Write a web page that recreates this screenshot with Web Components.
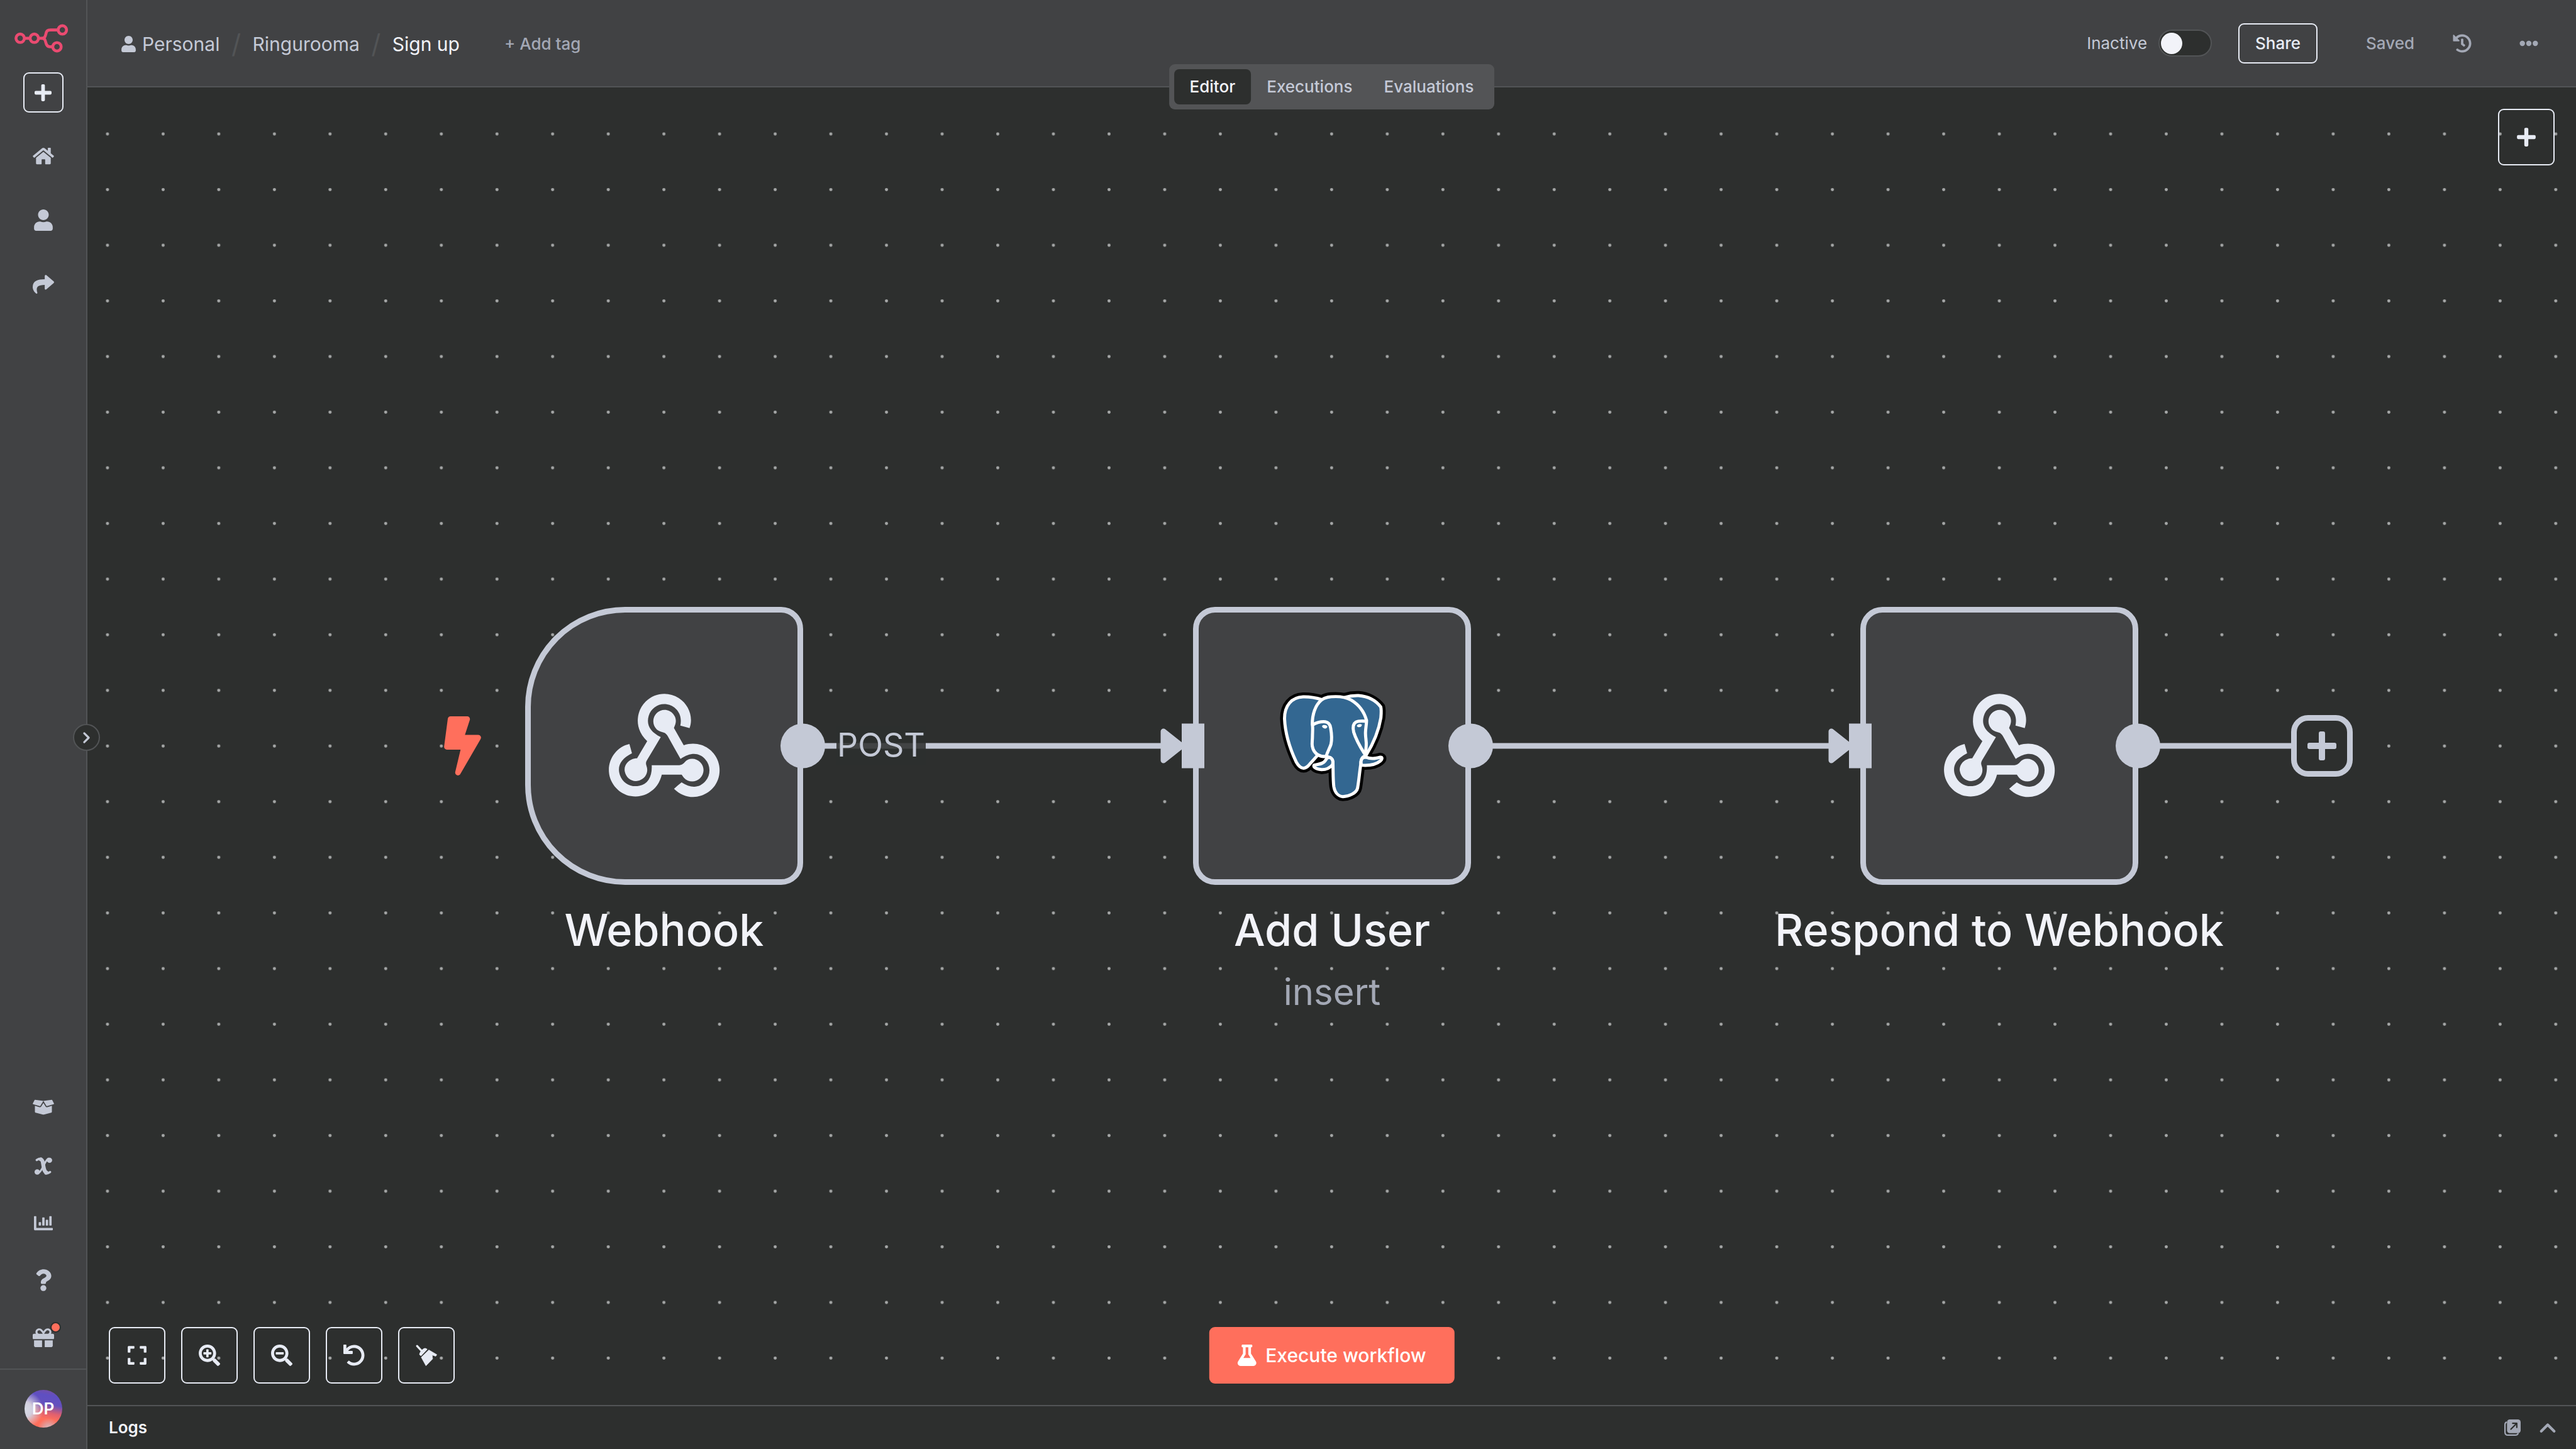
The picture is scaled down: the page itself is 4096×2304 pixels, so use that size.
<!DOCTYPE html>
<html lang="en">
<head>
<meta charset="utf-8">
<title>Sign up - workflow editor</title>
<style>
  html, body { margin: 0; height: 100%; }
  body {
    --panel: #414244;
    --canvas: #2d2f2e;
    --line: #525456;
    --text: #c4c9d6;
    --text-strong: #f2f3f9;
    --text-muted: #a3a8b5;
    --outline: #e7ebf4;
    --primary: #ff6f5c;
    background: var(--canvas);
    color: var(--text);
    font: 400 26px/34px Inter, "Liberation Sans", sans-serif;
    overflow: hidden;
  }
</style>
</head>
<body>
<app-shell></app-shell>

<script>
const ICONS = {
  plus: ['0 0 448 512', '<path d="M416 208H272V64c0-17.67-14.33-32-32-32h-32c-17.67 0-32 14.33-32 32v144H32c-17.67 0-32 14.33-32 32v32c0 17.67 14.33 32 32 32h144v144c0 17.67 14.33 32 32 32h32c17.67 0 32-14.33 32-32V304h144c17.67 0 32-14.33 32-32v-32c0-17.67-14.33-32-32-32z"/>'],
  home: ['0 0 576 512', '<path d="M488 312.7V456c0 13.3-10.7 24-24 24H348c-6.6 0-12-5.4-12-12V356c0-6.6-5.4-12-12-12h-72c-6.6 0-12 5.4-12 12v112c0 6.6-5.4 12-12 12H112c-13.3 0-24-10.7-24-24V312.7c0-3.6 1.6-7 4.4-9.3l188-154.8c4.4-3.6 10.8-3.6 15.3 0l188 154.8c2.7 2.3 4.3 5.7 4.3 9.3zm83.6-60.9L488 182.9V44.4c0-6.6-5.4-12-12-12h-56c-6.6 0-12 5.4-12 12V117l-89.5-73.7c-17.7-14.6-43.3-14.6-61 0L4.4 251.8c-5.1 4.2-5.8 11.8-1.6 16.9l25.5 31c4.2 5.1 11.8 5.8 16.9 1.6l235.2-193.7c4.4-3.6 10.8-3.6 15.3 0l235.2 193.7c5.1 4.2 12.7 3.5 16.9-1.6l25.5-31c4.2-5.2 3.4-12.7-1.7-16.9z"/>'],
  user: ['0 0 448 512', '<path d="M224 256c70.7 0 128-57.3 128-128S294.7 0 224 0 96 57.3 96 128s57.3 128 128 128zm89.6 32h-16.7c-22.2 10.2-46.9 16-72.9 16s-50.6-5.8-72.9-16h-16.7C60.2 288 0 348.2 0 422.4V464c0 26.5 21.5 48 48 48h352c26.5 0 48-21.5 48-48v-41.6c0-74.2-60.2-134.4-134.4-134.4z"/>'],
  share: ['0 0 512 512', '<path d="M503.691 189.836L327.687 37.851C312.281 24.546 288 35.347 288 56.015v80.053C127.371 137.907 0 170.1 0 322.326c0 61.441 39.581 122.309 83.333 154.132 13.653 9.931 33.111-2.533 28.077-18.631C66.066 312.814 132.917 274.316 288 272.085V360c0 20.7 24.3 31.453 39.687 18.164l176.004-152c11.071-9.562 11.086-26.753 0-36.328z"/>'],
  box: ['0 0 640 512', '<path d="M425.7 256c-16.9 0-32.8-9-41.4-23.4L320 126l-64.2 106.6c-8.7 14.5-24.6 23.5-41.5 23.5-4.5 0-9-.6-13.3-1.9L64 215v178c0 14.7 10 27.5 24.2 31l216.2 54.1c10.2 2.5 20.9 2.5 31 0L551.8 424c14.2-3.6 24.2-16.4 24.2-31V215l-137 39.1c-4.3 1.3-8.8 1.9-13.3 1.9zm212.6-112.2L586.8 41c-3.1-6.2-9.8-9.8-16.7-8.9L320 64l91.7 152.1c3.8 6.3 11.4 9.3 18.5 7.3l197.9-56.5c9.9-2.9 14.7-13.9 10.2-23.1zM53.2 41L1.7 143.8c-4.6 9.2.3 20.2 10.1 23l197.9 56.5c7.1 2 14.7-1 18.5-7.3L320 64 69.8 32.1c-6.9-.8-13.6 2.8-16.6 8.9z"/>'],
  variable: ['0 0 39 39', '<g fill="none" stroke="currentColor" stroke-linecap="round"><path stroke-width="8.500" d="M14 5C18 6 18 11 19.500 19C21 27 21.500 32 26 34"/><path stroke-width="5" d="M4.700 6.200C8 4 11 3 15 3.200M24 36C28 36.200 31 35.500 34.300 33"/><path stroke-width="4" d="M31 3C26 5 24 11 20 19C16 27 13 33 8 36"/></g><ellipse cx="33" cy="6.800" rx="5.900" ry="5.700"/><ellipse cx="5.800" cy="32.600" rx="5.900" ry="5.900"/>'],
  chart: ['0 0 512 512', '<path d="M332.8 320h38.4c6.4 0 12.8-6.4 12.8-12.8V172.8c0-6.4-6.4-12.8-12.8-12.8h-38.4c-6.400 0-12.8 6.4-12.8 12.8v134.4c0 6.4 6.4 12.8 12.8 12.8zm96 0h38.4c6.4 0 12.8-6.4 12.8-12.8V76.8c0-6.4-6.4-12.8-12.8-12.8h-38.4c-6.4 0-12.8 6.4-12.8 12.8v230.4c0 6.4 6.4 12.8 12.8 12.8zm-288 0h38.4c6.4 0 12.8-6.4 12.8-12.8v-70.4c0-6.4-6.4-12.8-12.8-12.8h-38.4c-6.4 0-12.8 6.4-12.8 12.8v70.4c0 6.4 6.4 12.8 12.8 12.8zm96 0h38.4c6.4 0 12.8-6.4 12.8-12.8V108.8c0-6.4-6.4-12.8-12.8-12.8h-38.4c-6.4 0-12.8 6.4-12.8 12.8v198.4c0 6.4 6.4 12.8 12.8 12.8zM496 384H64V80c0-8.84-7.16-16-16-16H16C7.16 64 0 71.16 0 80v336c0 17.67 14.33 32 32 32h464c8.84 0 16-7.16 16-16v-32c0-8.84-7.16-16-16-16z"/>'],
  question: ['0 0 384 512', '<path d="M202.021 0C122.202 0 70.503 32.703 29.914 91.026c-7.363 10.58-5.093 25.086 5.178 32.874l43.138 32.709c10.373 7.865 25.132 6.026 33.253-4.148 25.049-31.381 43.63-49.449 82.757-49.449 30.764 0 68.816 19.799 68.816 49.631 0 22.552-18.617 34.134-48.993 51.164-35.423 19.86-82.299 44.576-82.299 106.405V320c0 13.255 10.745 24 24 24h72.471c13.255 0 24-10.745 24-24v-5.773c0-42.86 125.268-44.645 125.268-160.627C377.504 66.256 286.902 0 202.021 0zM192 373.459c-38.196 0-69.271 31.075-69.271 69.271 0 38.195 31.075 69.27 69.271 69.27s69.271-31.075 69.271-69.271-31.075-69.27-69.271-69.27z"/>'],
  gift: ['0 0 512 512', '<path d="M32 448c0 17.7 14.3 32 32 32h160V320H32v128zm256 32h160c17.7 0 32-14.3 32-32V320H288v160zm192-320h-42.1c6.2-12.1 10.1-25.5 10.1-40 0-48.5-39.5-88-88-88-41.6 0-68.5 21.3-103 68.3-34.5-47-61.4-68.3-103-68.3-48.5 0-88 39.5-88 88 0 14.5 3.8 27.9 10.1 40H32c-17.7 0-32 14.3-32 32v80c0 8.8 7.2 16 16 16h480c8.8 0 16-7.2 16-16v-80c0-17.7-14.3-32-32-32zm-326.1 0c-22.1 0-40-17.9-40-40s17.9-40 40-40c19.9 0 34.6 3.3 86.1 80h-86.1zm206.1 0h-86.1c51.4-76.5 65.7-80 86.1-80 22.1 0 40 17.9 40 40s-17.9 40-40 40z"/>'],
  flask: ['0 0 448 512', '<path d="M437.2 403.5L320 215V64h8c13.3 0 24-10.7 24-24V24c0-13.3-10.7-24-24-24H120c-13.3 0-24 10.7-24 24v16c0 13.3 10.7 24 24 24h8v151L10.8 403.5C-18.5 450.6 15.3 512 70.9 512h306.2c55.7 0 89.4-61.5 60.1-108.5zM137.900 320l48.2-77.6c3.7-5.2 5.8-11.6 5.8-18.4V64h64v160c0 6.9 2.2 13.2 5.8 18.4l48.2 77.6h-172z"/>'],
  zoomIn: ['0 0 512 512', '<path d="M304 192v32c0 6.6-5.4 12-12 12h-56v56c0 6.600-5.4 12-12 12h-32c-6.6 0-12-5.4-12-12v-56h-56c-6.6 0-12-5.4-12-12v-32c0-6.6 5.4-12 12-12h56v-56c0-6.6 5.4-12 12-12h32c6.6 0 12 5.4 12 12v56h56c6.6 0 12 5.4 12 12zm201 284.7L476.7 505c-9.4 9.4-24.6 9.4-33.9 0L343 405.3c-4.5-4.5-7-10.6-7-17V372c-35.3 27.6-79.7 44-128 44C93.1 416 0 322.9 0 208S93.1 0 208 0s208 93.1 208 208c0 48.3-16.4 92.7-44 128h16.3c6.4 0 12.5 2.5 17 7l99.7 99.7c9.3 9.4 9.3 24.6 0 34zM344 208c0-75.2-60.8-136-136-136S72 132.8 72 208s60.8 136 136 136 136-60.8 136-136z"/>'],
  zoomOut: ['0 0 512 512', '<path d="M304 192v32c0 6.6-5.4 12-12 12H124c-6.6 0-12-5.4-12-12v-32c0-6.6 5.4-12 12-12h168c6.6 0 12 5.4 12 12zm201 284.7L476.7 505c-9.4 9.4-24.6 9.4-33.9 0L343 405.3c-4.5-4.5-7-10.6-7-17V372c-35.3 27.6-79.7 44-128 44C93.1 416 0 322.9 0 208S93.1 0 208 0s208 93.1 208 208c0 48.3-16.4 92.7-44 128h16.3c6.4 0 12.5 2.5 17 7l99.7 99.7c9.3 9.4 9.3 24.6 0 34zM344 208c0-75.2-60.8-136-136-136S72 132.8 72 208s60.8 136 136 136 136-60.8 136-136z"/>'],
  undo: ['0 0 512 512', '<path d="M212.333 224.333H12c-6.627 0-12-5.373-12-12V12C0 5.373 5.373 0 12 0h48c6.627 0 12 5.373 12 12v78.112C117.773 39.279 184.26 7.47 258.175 8.007c136.906.994 246.448 111.623 246.157 248.532C504.041 393.258 393.12 504 256.333 504c-64.089 0-122.496-24.313-166.51-64.215-5.099-4.622-5.334-12.554-.467-17.42l33.967-33.967c4.474-4.474 11.662-4.717 16.401-.525C170.76 415.336 211.58 432 256.333 432c97.268 0 176-78.716 176-176 0-97.267-78.716-176-176-176-58.496 0-110.28 28.476-142.274 72.333h98.274c6.627 0 12 5.373 12 12v48c0 6.627-5.373 12-12 12z"/>'],
  expand: ['0 0 448 512', '<path d="M0 180V56c0-13.3 10.7-24 24-24h124c6.6 0 12 5.4 12 12v40c0 6.6-5.4 12-12 12H64v84c0 6.6-5.4 12-12 12H12c-6.6 0-12-5.4-12-12zM288 44v40c0 6.6 5.4 12 12 12h84v84c0 6.6 5.4 12 12 12h40c6.6 0 12-5.4 12-12V56c0-13.3-10.7-24-24-24H300c-6.6 0-12 5.4-12 12zm148 276h-40c-6.6 0-12 5.4-12 12v84h-84c-6.6 0-12 5.4-12 12v40c0 6.6 5.4 12 12 12h124c13.3 0 24-10.7 24-24V332c0-6.600-5.4-12-12-12zM160 468v-40c0-6.6-5.4-12-12-12H64v-84c0-6.6-5.4-12-12-12H12c-6.6 0-12 5.4-12 12v124c0 13.3 10.7 24 24 24h124c6.6 0 12-5.4 12-12z"/>'],
  broom: ['0 0 48 48', '<path stroke="currentColor" stroke-width="4.500" stroke-linecap="round" d="M3 3L14 15"/><path stroke="currentColor" stroke-width="2" stroke-linejoin="round" d="M22 9L25 10.500L12 24.500L9 22C9.300 19 12 15 15 12C17.500 10 20 8.500 22 9z"/><path stroke="currentColor" stroke-width="1" stroke-linejoin="round" d="M29.500 12L47.500 22.500L45 26.200L37 23.500L38 32L23 47.500L12.500 28.500z"/>'],
  history: ['0 0 512 512', '<path d="M504 255.531c.253 136.64-111.18 248.372-247.82 248.468-59.015.042-113.223-20.53-155.822-54.911-11.077-8.94-11.905-25.541-1.839-35.607l11.267-11.267c8.609-8.609 22.353-9.551 31.891-1.984C173.062 425.135 212.781 440 256 440c101.705 0 184-82.311 184-184 0-101.705-82.311-184-184-184-48.814 0-93.149 18.969-126.068 49.932l50.754 50.754c10.08 10.08 2.941 27.314-11.313 27.314H24c-8.837 0-16-7.163-16-16V38.627c0-14.254 17.234-21.393 27.314-11.314l49.372 49.372C129.209 34.136 189.552 8 256 8c136.81 0 247.747 110.78 248 247.531zm-180.912 78.784l9.823-12.63c8.138-10.463 6.253-25.542-4.21-33.679L288 256.349V152c0-13.255-10.745-24-24-24h-16c-13.255 0-24 10.745-24 24v135.651l65.409 50.874c10.463 8.137 25.541 6.253 33.679-4.21z"/>'],
  dots: ['0 0 512 512', '<circle cx="80" cy="256" r="72"/><circle cx="256" cy="256" r="72"/><circle cx="432" cy="256" r="72"/>'],
  bolt: ['0 0 320 512', '<path d="M296 160H180.6l42.6-129.8C227.2 15 215.7 0 200 0H56C44 0 33.8 8.9 32.2 20.8l-32 240C-1.7 275.2 9.5 288 24 288h118.7L96.6 482.5c-3.6 15.2 8 29.5 23.3 29.5 8.4 0 16.4-4.4 20.8-12l176-304c9.3-15.9-2.2-36-20.7-36z"/>'],
  chevronRight: ['0 0 18 28', '<path d="M4 4L14 14L4 24" fill="none" stroke="currentColor" stroke-width="4.500" stroke-linecap="round" stroke-linejoin="round"/>'],
  chevronUp: ['0 0 36 24', '<path d="M3.500 19.500L18 5L32.500 19.500" fill="none" stroke="currentColor" stroke-width="6" stroke-linecap="round" stroke-linejoin="round"/>'],
  popOut: ['0 0 36 36', '<path d="M5.500 5.500C3 6.500 1.500 8 1.500 11V28C1.500 32 4 34.500 8 34.500H24C27.500 34.500 30 32.500 30.500 30" fill="none" stroke="currentColor" stroke-width="3"/><rect x="6" width="30" height="30" rx="6"/><path d="M14.500 21.500L27 9M18.500 8.500H27.500V17.500" fill="none" stroke="#2d2f2e" stroke-width="3" stroke-linecap="round" stroke-linejoin="round"/>'],
  brand: ['33 53 120 64', '<g fill="none" stroke="#ea4b71" stroke-width="6.500"><circle cx="45.700" cy="84.800" r="9.300"/><circle cx="77" cy="84.800" r="9.300"/><circle cx="139.300" cy="66.300" r="9.300"/><circle cx="127.300" cy="103.700" r="9.300"/><path d="M55 84.800H68M86 84.800H93C100 84.800 101 82 102.500 76C104 68.500 106 66.300 113 66.300H130M93 84.800C100 84.800 101 88 102.500 94C104 101 107 103.700 112 103.700H118"/></g>'],
  webhook: ['0 2 256 239', '<path d="M119.54 100.503c-10.61 17.836-20.775 35.108-31.152 52.25-2.665 4.401-3.984 7.986-1.855 13.58 5.878 15.454-2.414 30.493-17.998 34.575-14.697 3.851-29.016-5.808-31.932-21.543-2.584-13.927 8.224-27.58 23.58-29.757 1.286-.184 2.6-.205 4.762-.367l23.358-39.168C73.612 95.465 64.868 78.39 66.803 57.23c1.368-14.957 7.25-27.883 18-38.477 20.59-20.288 52.002-23.573 76.246-8.001 23.284 14.958 33.948 44.094 24.858 69.031-6.854-1.858-13.756-3.732-21.343-5.79 2.854-13.865.743-26.315-8.608-36.981-6.178-7.042-14.106-10.733-23.12-12.093-18.072-2.73-35.815 8.88-41.08 26.618-5.976 20.13 3.069 36.575 27.784 48.967z"/><path d="M149.841 79.41c7.475 13.187 15.065 26.573 22.587 39.836 38.02-11.763 66.686 9.284 76.97 31.817 12.422 27.219 3.93 59.457-20.465 76.25-25.04 17.238-56.707 14.293-78.892-7.851 5.654-4.733 11.336-9.487 17.407-14.566 21.912 14.192 41.077 13.524 55.305-3.282 12.133-14.337 11.87-35.714-.615-49.75-14.408-16.197-33.707-16.691-57.035-1.143-9.677-17.168-19.522-34.199-28.893-51.491-3.16-5.828-6.648-9.21-13.77-10.443-11.893-2.062-19.571-12.275-20.032-23.717-.453-11.316 6.214-21.545 16.634-25.53 10.322-3.949 22.435-.762 29.378 8.014 5.674 7.17 7.477 15.24 4.491 24.083-.83 2.466-1.905 4.852-3.07 7.774z"/><path d="M167.707 187.21h-45.77c-4.387 18.044-13.863 32.612-30.19 41.876-12.693 7.2-26.373 9.641-40.933 7.29-26.808-4.323-48.728-28.456-50.658-55.63-2.184-30.784 18.975-58.147 47.178-64.293 1.947 7.071 3.915 14.21 5.862 21.264-25.876 13.202-34.832 29.836-27.59 50.636 6.375 18.304 24.484 28.337 44.147 24.457 20.08-3.962 30.204-20.65 28.968-47.432 19.036 0 38.088-.197 57.126.097 7.434.117 13.173-.654 18.773-7.208 9.22-10.784 26.191-9.811 36.121.374 10.148 10.409 9.662 27.157-1.077 37.127-10.361 9.62-26.73 9.106-36.424-1.26-1.992-2.136-3.562-4.673-5.533-7.298z"/>'],
  postgres: ['12 73 800 800', `
    <defs>
      <path id="ear-r" d="M494 149C530 138 560 135 590 136C650 141 705 168 738 212C744 232 741 262 739 285C725 370 690 455 640 536L520 300z"/>
      <path id="ear-l" d="M346 164C300 150 250 144 218 145C140 148 94 205 94 290C98 385 132 495 172 580C190 612 205 622 222 622C240 622 250 610 262 596L312 540L330 300z"/>
      <path id="head" d="M280 330C279 262 300 200 341 166C368 145 400 143 437 143C480 143 512 151 540 166C590 196 626 240 643 302C643 330 636 360 636 388C636 420 643 440 641 470C640 500 634 515 636 538C612 548 604 562 604 600C596 650 592 705 583 755C576 790 522 812 485 813C450 810 430 780 424 745C418 700 420 640 418 580C414 550 392 546 372 545C350 545 335 543 318 533C300 522 285 505 280 475C276 455 281 440 281 410C281 380 285 352 280 330z"/>
      <path id="tusk-l" d="M418 580C414 556 400 550 389 550C376 552 372 566 365 574C350 596 322 594 292 602C284 612 300 626 342 632C378 632 402 616 416 598z"/>
      <path id="tusk-r" d="M606 580C608 556 620 549 640 549C675 564 705 556 735 549C750 549 750 562 735 574C704 600 660 606 608 602z"/>
    </defs>
    <g fill="#000" stroke="#000" stroke-width="60" stroke-linejoin="round"><use href="#ear-r"/><use href="#ear-l"/><use href="#head"/><use href="#tusk-l"/><use href="#tusk-r"/></g>
    <g fill="#336791" stroke="#fff" stroke-width="21" stroke-linejoin="round" stroke-linecap="round">
      <use href="#ear-r"/><use href="#ear-l"/><use href="#head"/><use href="#tusk-l"/><use href="#tusk-r"/>
      <path fill="none" d="M284 331C310 317 340 309 368 312C390 316 400 330 403 355C411 400 412 430 405 462C396 490 384 508 374 538M641 308C618 306 590 303 572 314C552 326 550 350 557 380C572 430 602 482 632 530"/>
    </g>
    <g fill="#fff"><path d="M345 341C350 330 372 331 381 342C382 350 372 357 364 357C356 356 346 349 345 341z"/><path d="M578 338C584 326 602 324 612 331C612 341 603 348 594 348C586 348 579 344 578 338z"/></g>`]
};

function define(name, css, html) {
  const template = document.createElement('template');
  const build = host => {
    template.innerHTML = `<style>*,*::before{box-sizing:border-box}${css}</style>${typeof html === 'function' ? html(host) : html}`;
    return template.content.cloneNode(true);
  };
  customElements.define(name, class extends HTMLElement {
    connectedCallback() {
      if (this.shadowRoot) return;
      this.attachShadow({ mode: 'open' }).append(build(this));
    }
  });
}

/* Icon: name picks the drawing, width is in pixels, height follows the view box. */
define('ui-icon', `
  :host { display: inline-flex; flex: none; }
  svg { display: block; fill: currentColor; overflow: visible; }
`, host => {
  const [box, body] = ICONS[host.getAttribute('name')];
  const [, , w, h] = box.split(' ').map(Number);
  const width = Number(host.getAttribute('width'));
  return `<svg viewBox="${box}" width="${width}" height="${Math.round(width * h / w)}" aria-hidden="true">${body}</svg>`;
});

/* Button with an outline, holding an icon or a short text. */
define('outline-button', `
  :host { display: block; flex: none; }
  button {
    display: flex; align-items: center; justify-content: center;
    width: var(--button-width, 90px); height: var(--button-height, 90px);
    margin: 0; padding: 0; border: 2px solid var(--outline); border-radius: 9px;
    background: none; color: var(--outline); font: inherit; font-weight: 500;
  }
`, host => `<button type="button" ${host.title ? `aria-label="${host.title}"` : ''}><slot></slot></button>`);

define('side-bar', `
  :host {
    position: relative; z-index: 2; display: flex; flex-direction: column; align-items: center; flex: none;
    width: 139px; background: var(--panel); border-right: 2px solid var(--line);
  }
  .brand { display: flex; padding: 38px 5px 31px 0; }
  outline-button { --button-width: 64px; --button-height: 64px; }
  nav { display: flex; flex-direction: column; width: 100%; }
  nav.top { padding-top: 18px; }
  nav.bottom { margin-top: auto; }
  a { display: flex; align-items: center; justify-content: center; color: var(--text); text-decoration: none; }
  .top a { height: 102px; }
  .bottom a { height: 91px; }
  .bottom a:first-child { margin-bottom: 2px; }
  .gift { position: relative; display: flex; }
  .gift::after {
    content: ""; position: absolute; right: -11px; top: -8px; width: 17px; height: 17px;
    box-sizing: border-box; border: 2px solid var(--canvas); border-radius: 50%; background: var(--primary);
  }
  .account { display: flex; justify-content: center; width: 100%; margin-top: 4px; padding: 32px 0 34px; border-top: 2px solid var(--line); }
  .avatar {
    display: flex; align-items: center; justify-content: center; width: 60px; height: 60px; border-radius: 50%;
    color: #fff; font-weight: 600;
    background:
      radial-gradient(circle at 64% 104%, #e0c4c8 0, #e0a0a0 10%, transparent 24%),
      radial-gradient(circle at 0 52%, #d8dbe6 0, #d2cfde 18%, transparent 44%),
      linear-gradient(190deg, #7c4f9e 0, #5f4fc2 18%, #6450bd 38%, #e0606f 58%, #ff6f5c 72%);
  }
  .collapse {
    position: absolute; top: 1151px; right: -22px; display: flex; align-items: center; justify-content: center;
    width: 43px; height: 43px; padding: 0; border: 2px solid var(--line); border-radius: 50%;
    background: var(--canvas); color: var(--text);
  }
`, `
  <div class="brand"><ui-icon name="brand" width="86"></ui-icon></div>
  <outline-button title="Create"><ui-icon name="plus" width="27"></ui-icon></outline-button>
  <nav class="top" aria-label="Main">
    <a href="#home" aria-label="Overview"><ui-icon name="home" width="34"></ui-icon></a>
    <a href="#personal" aria-label="Personal"><ui-icon name="user" width="30"></ui-icon></a>
    <a href="#shared" aria-label="Shared"><ui-icon name="share" width="34"></ui-icon></a>
  </nav>
  <nav class="bottom" aria-label="Resources">
    <a href="#templates" aria-label="Templates"><ui-icon name="box" width="34"></ui-icon></a>
    <a href="#variables" aria-label="Variables"><ui-icon name="variable" width="28"></ui-icon></a>
    <a href="#insights" aria-label="Insights"><ui-icon name="chart" width="30"></ui-icon></a>
    <a href="#help" aria-label="Help"><ui-icon name="question" width="26"></ui-icon></a>
    <a href="#news" aria-label="What is new"><span class="gift"><ui-icon name="gift" width="34"></ui-icon></span></a>
  </nav>
  <div class="account"><div class="avatar">DP</div></div>
  <button class="collapse" type="button" aria-label="Expand sidebar"><ui-icon name="chevronRight" width="13"></ui-icon></button>
`);

define('tab-bar', `
  :host { display: flex; padding: 8px; border-radius: 9px; background: #535456; }
  button {
    height: 56px; margin: 0; padding: 0 25px; border: 0; border-radius: 8px;
    background: none; color: var(--text); font: inherit; font-weight: 500;
  }
  button[aria-pressed=true] { background: var(--canvas); color: var(--text-strong); }
`, `
  <button type="button" aria-pressed="true">Editor</button>
  <button type="button" aria-pressed="false">Executions</button>
  <button type="button" aria-pressed="false">Evaluations</button>
`);

define('toggle-switch', `
  :host { display: block; flex: none; }
  label { display: flex; align-items: center; gap: 18px; }
  input {
    appearance: none; display: flex; align-items: center; width: 85px; height: 43px; margin: 0; padding: 0 2px;
    border: 2px solid var(--line); border-radius: 22px; background: var(--canvas);
  }
  input::before { content: ""; width: 34px; height: 34px; border-radius: 50%; background: var(--text-strong); }
`, `<label><slot></slot><input type="checkbox" role="switch"></label>`);

define('main-header', `
  :host {
    position: relative; z-index: 1; display: flex; align-items: center; flex: none; height: 139px;
    padding: 0 60px 0 54px; background: var(--panel); border-bottom: 2px solid var(--line);
  }
  .crumbs { display: flex; align-items: center; padding-top: 3px; font-size: 30px; line-height: 38px; }
  .crumbs a { display: flex; align-items: center; gap: 10px; color: var(--text); text-decoration: none; }
  .crumbs .sep { width: 52px; text-align: center; color: var(--line); font-size: 42px; line-height: 42px; }
  .crumbs .name { color: var(--text-strong); }
  .tag { margin: 0 0 0 71px; padding: 0; border: 0; background: none; color: var(--text-muted); font: inherit; font-size: 26px; font-weight: 500; }
  .actions { display: flex; align-items: center; margin-left: auto; }
  .actions outline-button { --button-width: 126px; --button-height: 64px; margin-left: 42px; }
  .saved { margin: 0 61px 0 77px; color: var(--text-muted); font-weight: 500; }
  .plain { display: flex; margin: 0; padding: 0; border: 0; background: none; color: var(--text-muted); }
  .plain + .plain { margin-left: 76px; }
  tab-bar { position: absolute; left: 50%; top: 102px; transform: translateX(-50%); }
`, `
  <nav class="crumbs" aria-label="Breadcrumb">
    <a href="#personal"><ui-icon name="user" width="23"></ui-icon>Personal</a>
    <span class="sep">/</span>
    <a href="#ringurooma">Ringurooma</a>
    <span class="sep">/</span>
    <span class="name">Sign up</span>
    <button class="tag" type="button">+ Add tag</button>
  </nav>
  <div class="actions">
    <toggle-switch>Inactive</toggle-switch>
    <outline-button>Share</outline-button>
    <span class="saved">Saved</span>
    <button class="plain" type="button" aria-label="History"><ui-icon name="history" width="30"></ui-icon></button>
    <button class="plain" type="button" aria-label="More"><ui-icon name="dots" width="30"></ui-icon></button>
  </div>
  <tab-bar></tab-bar>
`);

/* Node card with its handles; its icon comes in through the slot. */
define('flow-node', `
  :host { position: absolute; display: flex; flex-direction: column; align-items: center; width: 442px; }
  .card {
    position: relative; display: flex; align-items: center; justify-content: center; width: 442px; height: 442px;
    border: 9px solid var(--text); border-radius: 35px; background: var(--panel); color: var(--outline);
  }
  :host([trigger]) .card { border-radius: 159px 35px 35px 159px; }
  .in, .out, .bolt { position: absolute; top: 50%; transform: translateY(-50%); }
  .in { left: -27px; width: 36px; height: 71px; background: var(--text); }
  .out { right: -44px; width: 71px; height: 71px; border-radius: 50%; background: var(--text); }
  .bolt { left: -138px; color: var(--primary); }
  .label { margin-top: 28px; color: var(--text-strong); font-size: 70px; line-height: 88px; font-weight: 500; white-space: nowrap; }
  .sub { margin-top: 17px; color: var(--text-muted); font-size: 58px; line-height: 74px; white-space: nowrap; }
`, host => `
  <div class="card">
    ${host.hasAttribute('trigger') ? '<ui-icon class="bolt" name="bolt" width="59"></ui-icon>' : '<span class="in"></span>'}
    <slot></slot><span class="out"></span>
  </div>
  <div class="label">${host.getAttribute('label')}</div>
  ${host.hasAttribute('sub') ? `<div class="sub">${host.getAttribute('sub')}</div>` : ''}
`);

define('workflow-canvas', `
  :host { position: relative; display: block; flex: 1; min-height: 0; overflow: hidden; background: var(--canvas); }
  .grid, .edges { position: absolute; inset: 0; width: 100%; height: 100%; }
  .edge-label {
    position: absolute; left: 1191px; top: 1015px; padding: 0 1px; background: rgb(45 47 46 / 87%);
    font-size: 52px; line-height: 62px;
  }
  .n1 { left: 696px; top: 826px; }
  .n2 { left: 1758px; top: 826px; }
  .n3 { left: 2819px; top: 826px; }
  .append {
    position: absolute; left: 3504px; top: 998px; display: flex; align-items: center; justify-content: center;
    width: 98px; height: 98px; padding: 0; border: 9px solid var(--text); border-radius: 27px;
    background: none; color: var(--text);
  }
  .append svg { display: block; }
  .add { position: absolute; right: 34px; top: 34px; }
  .controls { position: absolute; left: 34px; bottom: 34px; display: flex; gap: 25px; }
  .run {
    position: absolute; left: 50%; bottom: 34px; transform: translateX(-50%);
    display: flex; align-items: center; gap: 15px; height: 90px; padding: 0 45px; border: 0; border-radius: 9px;
    background: var(--primary); color: #fff; font: inherit; font-size: 30px; font-weight: 500; white-space: nowrap;
  }
`, `
  <svg class="grid" aria-hidden="true">
    <defs><pattern id="dots" width="20" height="20" patternUnits="userSpaceOnUse" patternTransform="translate(-12.300 29.800) scale(4.42375)">
      <circle cx="10" cy="10" r=".56" fill="#a6a8a8"/></pattern></defs>
    <rect width="100%" height="100%" fill="url(#dots)"/>
  </svg>
  <svg class="edges" aria-hidden="true">
    <g fill="none" stroke="#c4c9d6" stroke-width="9"><path d="M1138 1047H1712M2200 1047H2774M3261 1047H3506"/></g>
    <g fill="#c4c9d6" stroke="#c4c9d6" stroke-width="9" stroke-linejoin="round"><path d="M1711 1024V1070L1740 1047zM2773 1024V1070L2802 1047z"/></g>
  </svg>
  <span class="edge-label">POST</span>
  <flow-node class="n1" label="Webhook" trigger><ui-icon name="webhook" width="177"></ui-icon></flow-node>
  <flow-node class="n2" label="Add User" sub="insert"><ui-icon name="postgres" width="190"></ui-icon></flow-node>
  <flow-node class="n3" label="Respond to Webhook"><ui-icon name="webhook" width="177"></ui-icon></flow-node>
  <button class="append" type="button" aria-label="Add next node">
    <svg width="46" height="46" viewBox="0 0 46 46" fill="currentColor"><rect x="18" width="10" height="46" rx="3"/><rect y="18" width="46" height="10" rx="3"/></svg>
  </button>
  <outline-button class="add" title="Add node"><ui-icon name="plus" width="30"></ui-icon></outline-button>
  <div class="controls">
    <outline-button title="Fit view"><ui-icon name="expand" width="30"></ui-icon></outline-button>
    <outline-button title="Zoom in"><ui-icon name="zoomIn" width="34"></ui-icon></outline-button>
    <outline-button title="Zoom out"><ui-icon name="zoomOut" width="34"></ui-icon></outline-button>
    <outline-button title="Reset zoom"><ui-icon name="undo" width="34"></ui-icon></outline-button>
    <outline-button title="Tidy up"><ui-icon name="broom" width="34"></ui-icon></outline-button>
  </div>
  <button class="run" type="button"><ui-icon name="flask" width="30"></ui-icon>Execute workflow</button>
`);

define('logs-panel', `
  :host {
    display: flex; align-items: center; flex: none; height: 70px; padding: 0 32px 0 34px;
    background: var(--canvas); border-top: 2px solid var(--line); color: var(--text-strong); font-weight: 600;
    box-sizing: border-box;
  }
  .tools { display: flex; align-items: center; gap: 30px; margin-left: auto; }
  button { display: flex; margin: 0; padding: 0; border: 0; background: none; color: var(--text-muted); }
`, `
  <span>Logs</span>
  <div class="tools">
    <button type="button" aria-label="Pop out"><ui-icon name="popOut" width="26"></ui-icon></button>
    <button type="button" aria-label="Open logs"><ui-icon name="chevronUp" width="26"></ui-icon></button>
  </div>
`);

define('app-shell', `
  :host { display: flex; height: 100vh; }
  main { display: flex; flex-direction: column; flex: 1; min-width: 0; }
  side-bar, main-header { box-sizing: border-box; }
`, `
  <side-bar></side-bar>
  <main>
    <main-header></main-header>
    <workflow-canvas></workflow-canvas>
    <logs-panel></logs-panel>
  </main>
`);
</script>
</body>
</html>
